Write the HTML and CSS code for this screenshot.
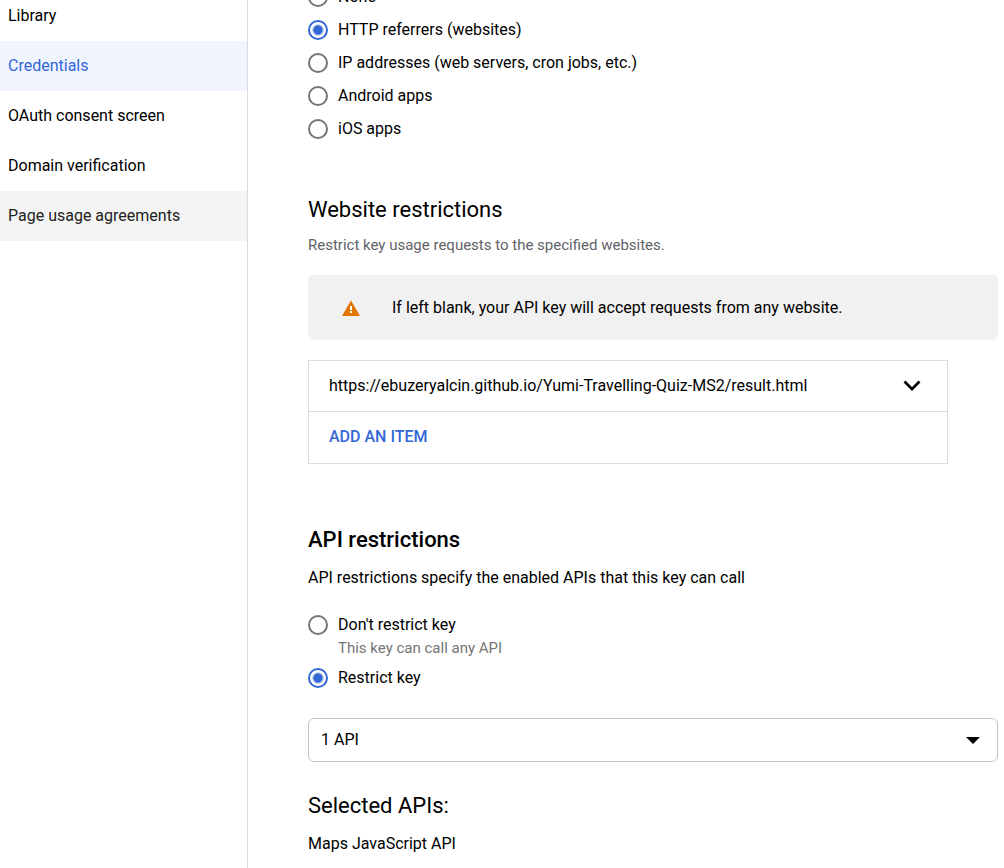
FILE: index.html
```html
<!DOCTYPE html>
<html lang="en">
<head>
<meta charset="utf-8">
<meta name="viewport" content="width=device-width, initial-scale=1">
<title>Credentials</title>
<link rel="stylesheet" href="styles.css">
</head>
<body>
<div class="layout">
  <nav class="sidebar" aria-label="APIs and services">
    <a class="nav-item" href="#library">Library</a>
    <a class="nav-item nav-item-active" href="#credentials" aria-current="page">Credentials</a>
    <a class="nav-item" href="#consent">OAuth consent screen</a>
    <a class="nav-item" href="#domain">Domain verification</a>
    <a class="nav-item nav-item-hover" href="#agreements">Page usage agreements</a>
  </nav>
  <main class="content">
    <div class="radio-list" role="radiogroup" aria-label="Application restrictions">
      <label class="radio-row"><input class="radio" type="radio" name="app">None</label>
      <label class="radio-row"><input class="radio" type="radio" name="app" checked>HTTP referrers (websites)</label>
      <label class="radio-row"><input class="radio" type="radio" name="app">IP addresses (web servers, cron jobs, etc.)</label>
      <label class="radio-row"><input class="radio" type="radio" name="app">Android apps</label>
      <label class="radio-row"><input class="radio" type="radio" name="app">iOS apps</label>
    </div>

    <section class="section">
      <h2 class="title">Website restrictions</h2>
      <p class="hint">Restrict key usage requests to the specified websites.</p>
      <div class="notice">
        <svg class="notice-icon" viewBox="0 0 18 16" aria-hidden="true">
          <path d="M9 .5 17.5 15a.7.7 0 0 1-.6 1H1.1a.7.7 0 0 1-.6-1Z" fill="#e37400"/>
          <path d="M8 6h2v4H8zM8 11h2v2H8z" fill="#fff"/>
        </svg>
        <p class="notice-text">If left blank, your API key will accept requests from any website.</p>
      </div>
      <div class="items">
        <button class="item" type="button" aria-expanded="false">
          <span>https://ebuzeryalcin.github.io/Yumi-Travelling-Quiz-MS2/result.html</span>
          <svg class="chevron" viewBox="0 0 18 12" aria-hidden="true"><path d="m1.5 1.5 7.5 7.5 7.5-7.5" fill="none" stroke="#000" stroke-width="2.7"/></svg>
        </button>
        <button class="item item-add" type="button">ADD AN ITEM</button>
      </div>
    </section>

    <section class="section">
      <h2 class="title title-strong">API restrictions</h2>
      <p class="text">API restrictions specify the enabled APIs that this key can call</p>
      <div class="radio-list-api" role="radiogroup" aria-label="API restrictions">
        <label class="radio-row"><input class="radio" type="radio" name="api" aria-describedby="any-api">Don't restrict key</label>
        <p class="radio-hint" id="any-api">This key can call any API</p>
        <label class="radio-row"><input class="radio" type="radio" name="api" checked>Restrict key</label>
      </div>
      <div class="select-box">
        <select class="select" aria-label="Allowed APIs"><option>1 API</option></select>
        <svg class="select-arrow" viewBox="0 0 14 7" aria-hidden="true"><path d="M0 0h14L7 7Z"/></svg>
      </div>
      <h2 class="title">Selected APIs:</h2>
      <p class="text">Maps JavaScript API</p>
    </section>
  </main>
</div>
</body>
</html>
```
FILE: styles.css
```css
* { box-sizing: border-box; }

body {
  margin: 0;
  background: #fff;
  color: #000;
  font: 16px/20px Roboto, "Liberation Sans", sans-serif;
}

h2, p { margin: 0; }

button, select { font: inherit; color: inherit; }

.layout {
  display: flex;
  height: 100vh;
  overflow: hidden;
}

/* Sidebar, scrolled a little past its first entry */
.sidebar {
  flex: 0 0 248px;
  display: flex;
  flex-direction: column;
  margin-top: -9px;
  border-right: 1px solid #dadce0;
}

.nav-item {
  padding: 15px 8px;
  color: #000;
  text-decoration: none;
}

.nav-item-active { background: #f0f4ff; color: #3367d6; }
.nav-item-hover { background: #f4f4f4; color: #212121; }

.content {
  flex: 1;
  min-width: 0;
  margin-top: -13px;
  padding: 0 6px 0 60px;
}

.radio-list {
  display: flex;
  flex-direction: column;
  gap: 13px;
}

.radio-row {
  display: flex;
  align-items: center;
  gap: 10px;
}

.radio {
  appearance: none;
  flex: none;
  width: 20px;
  height: 20px;
  margin: 0;
  border: 2px solid #757575;
  border-radius: 50%;
  background: #fff;
}

.radio:checked {
  border-color: #3367d6;
  background: radial-gradient(circle, #3367d6 4px, #fff 6px);
}

.section { margin-top: 57px; }

.title {
  font-size: 22px;
  line-height: 28px;
  font-weight: 400;
}

.title-strong { font-weight: 500; }

.hint {
  margin-top: 11px;
  color: #5f6368;
  font-size: 15px;
}

.notice {
  display: flex;
  align-items: center;
  gap: 32px;
  margin-top: 20px;
  padding: 23px 34px 22px;
  border-radius: 5px;
  background: #f1f1f1;
}

.notice-icon { flex: none; width: 18px; height: 16px; }

.items {
  max-width: 640px;
  margin-top: 20px;
  border: 1px solid #dadce0;
}

.item {
  display: flex;
  align-items: center;
  justify-content: space-between;
  width: 100%;
  padding: 15px 26px 15px 20px;
  border: 0;
  background: none;
  text-align: left;
}

.item-add {
  padding-bottom: 16px;
  border-top: 1px solid #dadce0;
  color: #3367d6;
  font-weight: 500;
}

.chevron { width: 18px; height: 12px; }

.section + .section { margin-top: 62px; }

.text { margin-top: 14px; }

.radio-list-api { margin: 27px 0 30px; }

.radio-hint {
  margin: 3px 0 10px 30px;
  color: #757575;
  font-size: 15px;
}

.select-box {
  display: grid;
  align-items: center;
  margin-bottom: 30px;
}

.select {
  grid-area: 1 / 1;
  appearance: none;
  width: 100%;
  height: 44px;
  padding: 0 40px 0 12px;
  border: 1px solid #c4c4c4;
  border-radius: 6px;
  background: #fff;
}

.select-arrow {
  grid-area: 1 / 1;
  justify-self: end;
  width: 14px;
  height: 7px;
  margin-right: 18px;
  pointer-events: none;
}
```
